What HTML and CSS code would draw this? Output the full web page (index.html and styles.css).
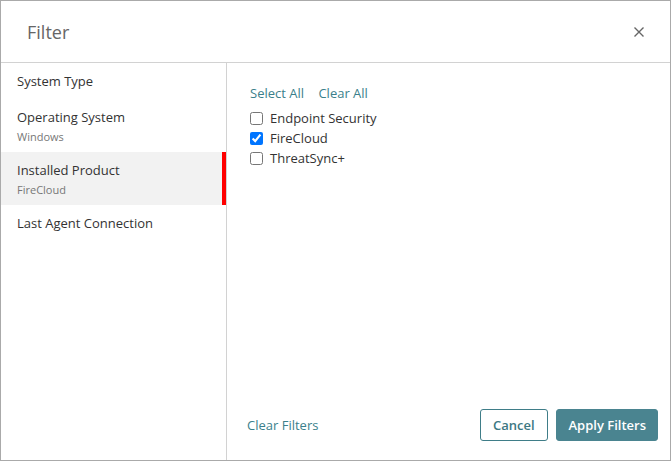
FILE: index.html
```html
<!DOCTYPE html>
<html lang="en">
<head>
    <meta charset="UTF-8">
    <meta name="viewport" content="width=device-width, initial-scale=1.0">
    <title>Filter</title>
    <link rel="stylesheet" href="styles.css">
</head>
<body>
    <div class="dialog">
        <div class="dialog-header">
            <div class="dialog-title">Filter</div>
            <button class="close-button" aria-label="Close">
                <svg width="10" height="10" viewBox="0 0 10 10">
                    <path d="M0.5 0.5L9.5 9.5M9.5 0.5L0.5 9.5" stroke="#666" stroke-width="1.4" fill="none"/>
                </svg>
            </button>
        </div>
        <div class="dialog-body">
            <div class="filter-nav">
                <div class="nav-item">
                    <div class="nav-label">System Type</div>
                </div>
                <div class="nav-item">
                    <div class="nav-label">Operating System</div>
                    <div class="nav-value">Windows</div>
                </div>
                <div class="nav-item active">
                    <div class="nav-label">Installed Product</div>
                    <div class="nav-value">FireCloud</div>
                </div>
                <div class="nav-item">
                    <div class="nav-label">Last Agent Connection</div>
                </div>
            </div>
            <div class="filter-panel">
                <div class="filter-options">
                    <div class="bulk-links">
                        <a class="link" href="#">Select All</a>
                        <a class="link" href="#">Clear All</a>
                    </div>
                    <label class="option"><input type="checkbox"> Endpoint Security</label>
                    <label class="option"><input type="checkbox" checked> FireCloud</label>
                    <label class="option"><input type="checkbox"> ThreatSync+</label>
                </div>
                <div class="dialog-footer">
                    <a class="link" href="#">Clear Filters</a>
                    <div class="footer-buttons">
                        <button class="btn btn-secondary">Cancel</button>
                        <button class="btn btn-primary">Apply Filters</button>
                    </div>
                </div>
            </div>
        </div>
    </div>
</body>
</html>
```

FILE: styles.css
```css
body {
    margin: 0;
    font-family: "Open Sans", sans-serif;
    font-size: 13px;
    color: #333;
    background-color: white;
}
.dialog {
    width: 671px;
    height: 461px;
    box-sizing: border-box;
    border: 1px solid #aaa;
    display: flex;
    flex-direction: column;
}
.dialog-header {
    height: 61px;
    flex-shrink: 0;
    border-bottom: 1px solid #d2d2d2;
    display: flex;
    align-items: center;
    justify-content: space-between;
    padding: 0 26px;
}
.dialog-title {
    font-size: 18px;
    line-height: 24px;
    color: #666;
    padding-top: 1px;
}
.close-button {
    border: none;
    background: none;
    padding: 0;
    width: 10px;
    height: 10px;
    display: flex;
    cursor: pointer;
}
.dialog-body {
    flex: 1;
    display: flex;
    min-height: 0;
}
.filter-nav {
    width: 225px;
    flex-shrink: 0;
    border-right: 1px solid #d2d2d2;
}
.nav-item {
    padding: 8px 16px 7px;
    cursor: pointer;
}
.nav-item.active {
    background-color: #f2f2f2;
    border-right: 4px solid #ff0000;
}
.nav-label {
    line-height: 21px;
    color: #333;
}
.nav-value {
    font-size: 11px;
    line-height: 17px;
    color: #777;
}
.filter-panel {
    flex: 1;
    display: flex;
    flex-direction: column;
}
.filter-options {
    padding: 22px 23px 0 23px;
}
.bulk-links {
    line-height: 17px;
    margin-bottom: 6px;
}
.bulk-links .link {
    margin-right: 11px;
}
.link {
    color: #3b7f8b;
    text-decoration: none;
}
.option {
    display: flex;
    align-items: center;
    gap: 7px;
    height: 20px;
    color: #333;
}
.option input {
    margin: 0;
    width: 13px;
    height: 13px;
}
.dialog-footer {
    margin-top: auto;
    display: flex;
    align-items: center;
    justify-content: space-between;
    padding: 0 12px 19px 20px;
    line-height: 17px;
}
.footer-buttons {
    display: flex;
    gap: 8px;
}
.btn {
    height: 32px;
    padding: 0 12px;
    font-family: "Open Sans", sans-serif;
    font-size: 13px;
    font-weight: 600;
    border-radius: 3px;
    cursor: pointer;
}
.btn-secondary {
    background-color: white;
    color: #3d7883;
    border: 1px solid #3f7d88;
}
.btn-primary {
    background-color: #4a8490;
    color: white;
    border: 1px solid #4a8490;
    padding: 0 11px 0 12px;
}
```
